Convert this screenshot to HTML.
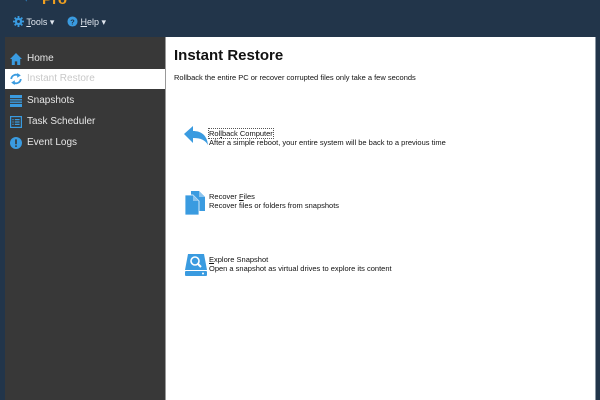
<!DOCTYPE html>
<html><head><meta charset="utf-8"><style>
*{margin:0;padding:0;box-sizing:border-box}
body{width:600px;height:400px;background:#22354a;font-family:"Liberation Sans",sans-serif;position:relative;overflow:hidden}
.abs{position:absolute}
.logo{left:42px;top:-9px;color:#f0a020;font-size:15px;font-weight:bold}
.menu{top:16px;color:#e0e6ee;font-size:9px}
.side{left:5px;top:37px;width:160px;height:363px;background:#383838}
.item{position:absolute;left:0;width:160px;height:20px;color:#e6e6e6;font-size:10px;line-height:20px;padding-left:22px}
.item.sel{background:#fff;color:#c8c8c8}
.ic{position:absolute;left:5px;top:4px;width:12px;height:12px}
.main{left:165px;top:37px;width:430px;height:363px;background:#fff;border-left:1px solid #999}
.rb{left:595px;top:37px;width:1px;height:363px;background:#8a96a2}
h1{position:absolute;left:8px;top:10px;font-size:15px;font-weight:bold;color:#111}
.sub{left:8px;top:36px;font-size:7.5px;color:#111}
.act{font-size:7.5px;color:#111;line-height:9px}
</style></head><body>
<div class="abs logo">Pro</div>
<div class="abs" style="left:22px;top:-6px;width:14px;height:8px;color:#2f8fd8;font-size:10px">✦</div>
<div class="abs menu" style="left:13px"><svg width="11" height="11" viewBox="0 0 12 12" style="vertical-align:-2px"><circle cx="6" cy="6" r="4" fill="#3a9be0"/><g stroke="#3a9be0" stroke-width="2"><path d="M6 0v12M0 6h12M1.8 1.8l8.4 8.4M10.2 1.8l-8.4 8.4"/></g><circle cx="6" cy="6" r="1.6" fill="#22354a"/></svg> <u>T</u>ools ▾</div>
<div class="abs menu" style="left:67px"><svg width="11" height="11" viewBox="0 0 12 12" style="vertical-align:-2px"><circle cx="6" cy="6" r="5.5" fill="#3a9be0"/><text x="6" y="9" font-size="8" font-weight="bold" text-anchor="middle" fill="#22354a" font-family="Liberation Sans">?</text></svg> <u>H</u>elp ▾</div>
<div class="abs side">
<div class="item" style="top:12px"><svg class="ic" viewBox="0 0 10 10"><path d="M5 0L0 5h1.5v5h2.5V7h2v3h2.5V5H10z" fill="#3a9be0"/></svg>Home</div>
<div class="item sel" style="top:32px"><svg class="ic" viewBox="0 0 10 10"><path d="M1 5a4 4 0 0 1 6-3M9 5a4 4 0 0 1-6 3" stroke="#3a9be0" stroke-width="1.5" fill="none"/><path d="M6 0l3 2-3 2zM4 10L1 8l3-2z" fill="#3a9be0"/></svg>Instant Restore</div>
<div class="item" style="top:54px"><svg class="ic" viewBox="0 0 10 10"><rect width="10" height="10" fill="#3a9be0"/><path d="M0 3h10M0 5h10M0 7h10" stroke="#383838" stroke-width=".8"/></svg>Snapshots</div>
<div class="item" style="top:75px"><svg class="ic" viewBox="0 0 10 10"><rect x=".5" y=".5" width="9" height="9" fill="none" stroke="#3a9be0"/><path d="M2 3h1M4 3h4M2 5h1M4 5h4M2 7h1M4 7h4" stroke="#3a9be0"/></svg>Task Scheduler</div>
<div class="item" style="top:96px"><svg class="ic" viewBox="0 0 10 10"><circle cx="5" cy="5" r="5" fill="#3a9be0"/><path d="M5 2v4M5 7v1.2" stroke="#383838" stroke-width="1.4"/></svg>Event Logs</div>
</div>
<div class="abs main">
<h1>Instant Restore</h1>
<div class="abs sub">Rollback the entire PC or recover corrupted files only take a few seconds</div>
<svg class="abs" style="left:18px;top:89px" width="25" height="22" viewBox="0 0 25 22"><path d="M0 8L9 0v5c8 0 14 4 15 14-3-5-7-7-15-7v5z" fill="#3a9be0"/></svg>
<div class="abs act" style="left:43px;top:92px"><span style="outline:1px dotted #555">Rol<u>l</u>back Computer</span><br>After a simple reboot, your entire system will be back to a previous time</div>
<svg class="abs" style="left:19px;top:154px" width="22" height="24" viewBox="0 0 22 24"><path d="M6 0h8l6 6v14H6z" fill="#3a9be0"/><path d="M14 0v6h6" fill="#8cc4ee"/><path d="M0 4h8l6 6v14H0z" fill="#3a9be0" stroke="#fff" stroke-width=".8"/><path d="M8 4v6h6" fill="#8cc4ee"/></svg>
<div class="abs act" style="left:43px;top:155px">Recover <u>F</u>iles<br>Recover files or folders from snapshots</div>
<svg class="abs" style="left:19px;top:217px" width="22" height="22" viewBox="0 0 22 22"><path d="M3 0h16l3 16H0z" fill="#3a9be0"/><rect x="0" y="17" width="22" height="5" rx="1" fill="#3a9be0"/><circle cx="18" cy="19.5" r="1" fill="#fff"/><circle cx="10" cy="7" r="4" fill="none" stroke="#fff" stroke-width="1.6"/><path d="M13 10l3 3" stroke="#fff" stroke-width="2"/></svg>
<div class="abs act" style="left:43px;top:218px"><u>E</u>xplore Snapshot<br>Open a snapshot as virtual drives to explore its content</div>
</div>
<div class="abs rb"></div>
</body></html>
